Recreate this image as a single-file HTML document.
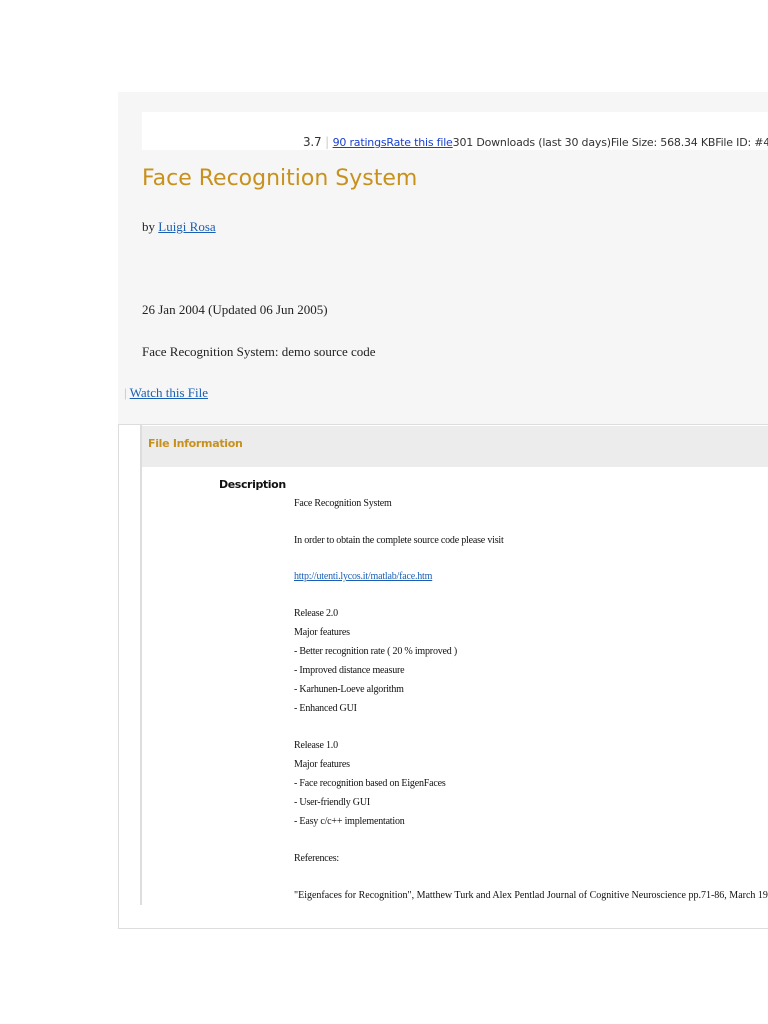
<!DOCTYPE html>
<html><head><style>
body{margin:0;width:768px;height:1024px;background:#fff;position:relative;overflow:hidden;font-family:"Liberation Serif",serif;}
.a{position:absolute;white-space:nowrap}
.lnk{color:#1a5fb4;text-decoration:underline}
.s{font-family:"DejaVu Sans","Liberation Sans",sans-serif}
.d{font-size:10px;color:#111;letter-spacing:-0.2px}
</style></head><body>
<div class="a" style="left:118px;top:92px;width:650px;height:333px;background:#f6f6f6"></div>
<div class="a" style="left:142px;top:112px;width:626px;height:38px;background:#fff"></div>
<div class="a s" style="left:303px;top:135px;font-size:12px;color:#333;letter-spacing:-0.2px">3.7 <span style="color:#ccc">|</span> <span class="lnk" style="font-size:11px;color:#1a3fd0">90 ratingsRate this file</span><span style="font-size:11px">301 Downloads (last 30 days)File Size: 568.34 KBFile ID: #4</span></div>
<div class="a s" style="left:142px;top:166px;font-size:22px;color:#c8911c">Face Recognition System</div>
<div class="a" style="left:142px;top:219px;font-size:13px;color:#222">by <span class="lnk">Luigi Rosa</span></div>
<div class="a" style="left:142px;top:302px;font-size:13px;color:#222">26 Jan 2004 (Updated 06 Jun 2005)</div>
<div class="a" style="left:142px;top:344px;font-size:13px;color:#222">Face Recognition System: demo source code</div>
<div class="a" style="left:124px;top:385px;font-size:13px;color:#222"><span style="color:#bbb">|</span> <span class="lnk">Watch this File</span></div>
<div class="a" style="left:118px;top:424px;width:650px;height:503px;border:1px solid #ddd;border-right:none;background:#fff"></div>
<div class="a" style="left:140px;top:425px;width:2px;height:480px;background:#ddd"></div>
<div class="a" style="left:142px;top:426px;width:626px;height:41px;background:#ececec"></div>
<div class="a s" style="left:148px;top:437px;font-size:11px;font-weight:bold;color:#c8911c;letter-spacing:-0.3px">File Information</div>
<div class="a s" style="left:219px;top:478px;font-size:11px;font-weight:bold;color:#111;letter-spacing:-0.4px">Description</div>
<div class="a d" style="left:294px;top:498px">Face Recognition System</div>
<div class="a d" style="left:294px;top:535px">In order to obtain the complete source code please visit</div>
<div class="a d lnk" style="left:294px;top:571px;color:#1a5fb4">http://utenti.lycos.it/matlab/face.htm</div>
<div class="a d" style="left:294px;top:608px">Release 2.0</div>
<div class="a d" style="left:294px;top:627px">Major features</div>
<div class="a d" style="left:294px;top:646px">- Better recognition rate ( 20 % improved )</div>
<div class="a d" style="left:294px;top:665px">- Improved distance measure</div>
<div class="a d" style="left:294px;top:684px">- Karhunen-Loeve algorithm</div>
<div class="a d" style="left:294px;top:703px">- Enhanced GUI</div>
<div class="a d" style="left:294px;top:740px">Release 1.0</div>
<div class="a d" style="left:294px;top:759px">Major features</div>
<div class="a d" style="left:294px;top:778px">- Face recognition based on EigenFaces</div>
<div class="a d" style="left:294px;top:797px">- User-friendly GUI</div>
<div class="a d" style="left:294px;top:816px">- Easy c/c++ implementation</div>
<div class="a d" style="left:294px;top:853px">References:</div>
<div class="a d" style="left:294px;top:890px;letter-spacing:0px">"Eigenfaces for Recognition", Matthew Turk and Alex Pentlad Journal of Cognitive Neuroscience pp.71-86, March 1991</div>
</body></html>
